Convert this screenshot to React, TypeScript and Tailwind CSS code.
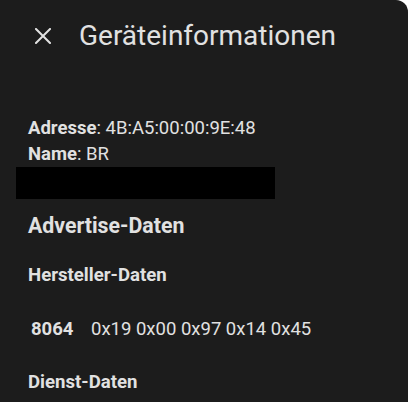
import React from 'react'

function CloseIcon() {
    return (
        <svg width="16" height="16" viewBox="0 0 16 16" className="shrink-0">
            <path d="M1 1L15 15M15 1L1 15" stroke="#e1e1e1" strokeWidth="2" strokeLinecap="square" />
        </svg>
    )
}

export default function App() {
    return (
        <div
            className="w-[408px] h-[402px] overflow-hidden bg-[#1c1c1c] text-[#e1e1e1] rounded-tr-[12px]"
            style={{ fontFamily: 'Roboto, "Noto Sans", sans-serif' }}
        >
            <div className="flex h-[72px] items-center pl-[35px]">
                <CloseIcon />
                <h2 className="ml-[28px] text-[28px] leading-[32px] font-normal">Geräteinformationen</h2>
            </div>

            <div className="pt-[43px]">
                <div className="pl-[28px] text-[18.5px] leading-[26px]">
                    <div><span className="font-bold">Adresse</span>: 4B:A5:00:00:9E:48</div>
                    <div><span className="font-bold">Name</span>: BR</div>
                </div>
                <div className="ml-[16px] h-[32px] w-[259px] bg-black" />

                <h3 className="mt-[15px] pl-[28px] text-[21.3px] leading-[24px] font-bold">Advertise-Daten</h3>
                <h4 className="mt-[25px] pl-[28px] text-[18.6px] leading-[24px] font-bold">Hersteller-Daten</h4>
                <div className="mt-[30px] flex pl-[31px] text-[18.5px] leading-[24px]">
                    <span className="w-[60px] font-bold">8064</span>
                    <span>0x19 0x00 0x97 0x14 0x45</span>
                </div>
                <h4 className="mt-[29px] pl-[28px] text-[18.6px] leading-[24px] font-bold">Dienst-Daten</h4>
            </div>
        </div>
    )
}
